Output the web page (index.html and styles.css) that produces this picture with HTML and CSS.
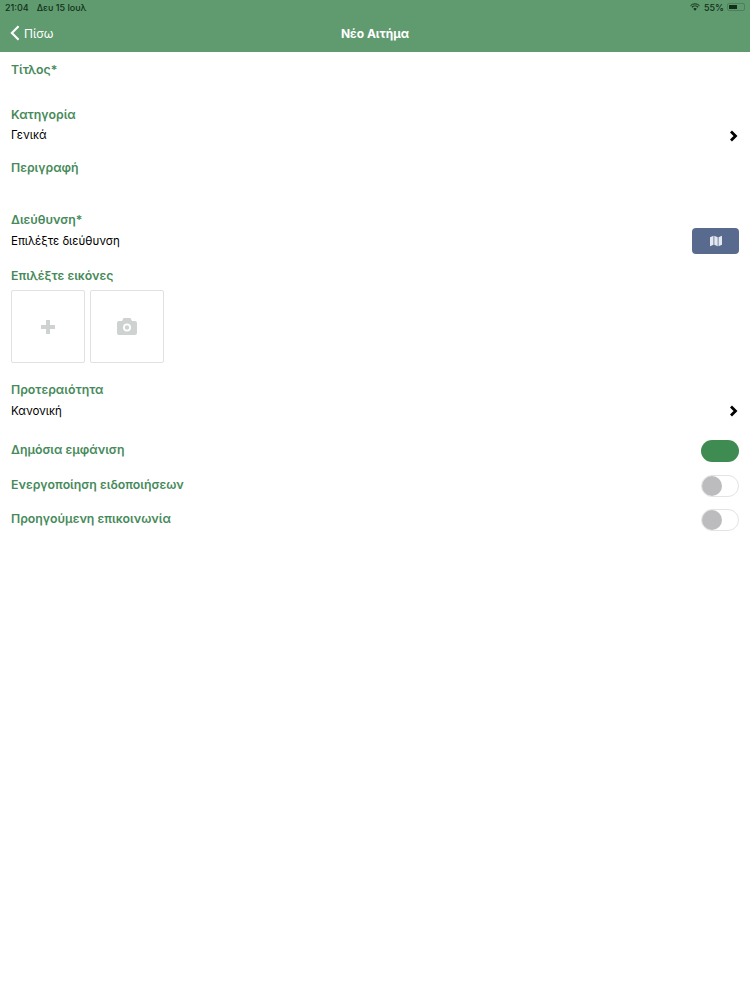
FILE: index.html
```html
<!DOCTYPE html>
<html>
<head>
  <title>Νέο Αιτήμα</title>
  <link rel="stylesheet" href="styles.css">
</head>
<body>
  <header class="top-bar">
    <div class="status-bar">
      <div class="status-left">
        <span>21:04</span>
        <span>Δευ 15 Ιουλ</span>
      </div>
      <div class="status-right">
        <svg class="wifi-icon" viewBox="0 0 16 12">
          <path d="M8 11.8 5.2 8.8a4 4 0 0 1 5.6 0z" fill="#123018"/>
          <path d="M3 6.4a7.2 7.2 0 0 1 10 0" fill="none" stroke="#123018" stroke-width="1.7"/>
          <path d="M.8 3.8a10.5 10.5 0 0 1 14.4 0" fill="none" stroke="#123018" stroke-width="1.6"/>
        </svg>
        <span>55%</span>
        <div class="battery"><div class="battery-level"></div></div>
      </div>
    </div>
    <nav class="nav-bar">
      <div class="back-link">
        <svg class="back-icon" viewBox="0 0 11 18">
          <path d="M9.5 1.5 2 9l7.5 7.5" fill="none" stroke="#fff" stroke-width="2.4"/>
        </svg>
        <span>Πίσω</span>
      </div>
      <div class="nav-title">Νέο Αιτήμα</div>
    </nav>
  </header>

  <main class="form">
    <label class="field-label title-label">Τίτλος*</label>

    <label class="field-label category-label">Κατηγορία</label>
    <div class="value-row">
      <span>Γενικά</span>
      <svg class="chevron" viewBox="0 0 9 12">
        <path d="M2 1.5 6.5 6 2 10.5" fill="none" stroke="#000" stroke-width="2.8"/>
      </svg>
    </div>

    <label class="field-label description-label">Περιγραφή</label>

    <label class="field-label address-label">Διεύθυνση*</label>
    <div class="value-row address-row">
      <span>Επιλέξτε διεύθυνση</span>
      <button class="map-button">
        <svg class="map-icon" viewBox="0 0 12 12">
          <path d="M0 2.2 3.5.8v9L0 11.2zM4.3.8l3.4 1.4v9L4.3 9.8zM8.5 2.2 12 .8v9l-3.5 1.4z" fill="#e4e8f0"/>
        </svg>
      </button>
    </div>

    <label class="field-label images-label">Επιλέξτε εικόνες</label>
    <div class="image-tiles">
      <div class="tile">
        <svg class="plus-icon" viewBox="0 0 14 14">
          <path d="M7 0v14M0 7h14" stroke="#ced2d0" stroke-width="4"/>
        </svg>
      </div>
      <div class="tile">
        <svg class="camera-icon" viewBox="0 0 20 17">
          <path fill-rule="evenodd" fill="#ced2d0" d="M6.5 0h7L15 3h3a2 2 0 0 1 2 2v10a2 2 0 0 1-2 2H2a2 2 0 0 1-2-2V5a2 2 0 0 1 2-2h3zM10 5.5a4 4 0 1 0 0 8 4 4 0 0 0 0-8zm0 1.8a2.2 2.2 0 1 1 0 4.4 2.2 2.2 0 0 1 0-4.4z"/>
        </svg>
      </div>
    </div>

    <label class="field-label priority-label">Προτεραιότητα</label>
    <div class="value-row priority-row">
      <span>Κανονική</span>
      <svg class="chevron" viewBox="0 0 9 12">
        <path d="M2 1.5 6.5 6 2 10.5" fill="none" stroke="#000" stroke-width="2.8"/>
      </svg>
    </div>

    <div class="toggle-list">
      <div class="toggle-row">
        <label class="field-label">Δημόσια εμφάνιση</label>
        <div class="toggle on"></div>
      </div>
      <div class="toggle-row">
        <label class="field-label">Ενεργοποίηση ειδοποιήσεων</label>
        <div class="toggle"><div class="knob"></div></div>
      </div>
      <div class="toggle-row">
        <label class="field-label">Προηγούμενη επικοινωνία</label>
        <div class="toggle"><div class="knob"></div></div>
      </div>
    </div>
  </main>
</body>
</html>
```

FILE: styles.css
```css
body {
  margin: 0;
  background-color: #fff;
  font-family: "Inter", "Noto Sans", sans-serif;
  color: #000;
}

.top-bar {
  height: 52px;
  background-color: #5f9b6f;
  box-sizing: border-box;
}

.status-bar {
  height: 14px;
  padding: 0 5px 0 5px;
  display: flex;
  justify-content: space-between;
  align-items: center;
  font-size: 9px;
  font-weight: 500;
  color: #123018;
}

.status-left {
  display: flex;
  gap: 8px;
}

.status-right {
  display: flex;
  align-items: center;
  gap: 3px;
}

.wifi-icon {
  width: 10px;
  height: 8px;
  margin-right: 1px;
}

.battery {
  width: 18px;
  height: 8px;
  border: 1px solid #4c7f5a;
  border-radius: 2px;
  box-sizing: border-box;
  padding: 1px;
}

.battery-level {
  width: 55%;
  height: 100%;
  background-color: #123018;
}

.nav-bar {
  height: 38px;
  padding: 0 10px;
  display: flex;
  align-items: center;
  position: relative;
}

.back-link {
  display: flex;
  align-items: center;
  gap: 4px;
  color: #fff;
  font-size: 12px;
}

.back-icon {
  width: 10px;
  height: 16px;
}

.nav-title {
  position: absolute;
  left: 0;
  right: 0;
  text-align: center;
  color: #fff;
  font-size: 12px;
  font-weight: 700;
}

.form {
  padding: 9px 11px 0 11px;
}

.field-label {
  display: block;
  height: 18px;
  line-height: 18px;
  font-size: 12.3px;
  font-weight: 600;
  color: #478a5a;
}

.category-label {
  margin-top: 27px;
}

.description-label {
  margin-top: 14px;
}

.address-label {
  margin-top: 34px;
}

.images-label {
  margin-top: 13px;
}

.priority-label {
  margin-top: 18px;
}

.value-row {
  height: 20px;
  margin-top: 1px;
  display: flex;
  justify-content: space-between;
  align-items: center;
  font-size: 11.5px;
}

.address-row {
  height: 26px;
  margin-top: -1px;
}

.priority-row {
  margin-top: 2px;
}

.chevron {
  width: 9px;
  height: 12px;
  margin: 2px 1px 0 0;
}

.priority-row .chevron {
  margin-top: 0;
}

.map-button {
  width: 47px;
  height: 26px;
  padding: 0;
  border: none;
  border-radius: 4px;
  background-color: #596a8f;
  display: flex;
  justify-content: center;
  align-items: center;
}

.map-icon {
  width: 12px;
  height: 12px;
}

.image-tiles {
  margin-top: 5px;
  display: flex;
  gap: 5px;
}

.tile {
  width: 74px;
  height: 73px;
  box-sizing: border-box;
  border: 1px solid #dfe2e0;
  border-radius: 2px;
  display: flex;
  justify-content: center;
  align-items: center;
}

.plus-icon {
  width: 14px;
  height: 14px;
}

.camera-icon {
  width: 20px;
  height: 17px;
}

.toggle-list {
  margin-top: 19px;
  display: flex;
  flex-direction: column;
  gap: 12.5px;
}

.toggle-row {
  height: 22px;
  display: flex;
  justify-content: space-between;
  align-items: center;
}

.toggle-row .field-label {
  margin-bottom: 2px;
}

.toggle {
  width: 38px;
  height: 22px;
  box-sizing: border-box;
  border: 1px solid #e3e3e3;
  border-radius: 11px;
}

.toggle.on {
  border: none;
  background-color: #3f8c53;
}

.knob {
  width: 20px;
  height: 20px;
  border-radius: 50%;
  background-color: #bcbcbe;
}
```
